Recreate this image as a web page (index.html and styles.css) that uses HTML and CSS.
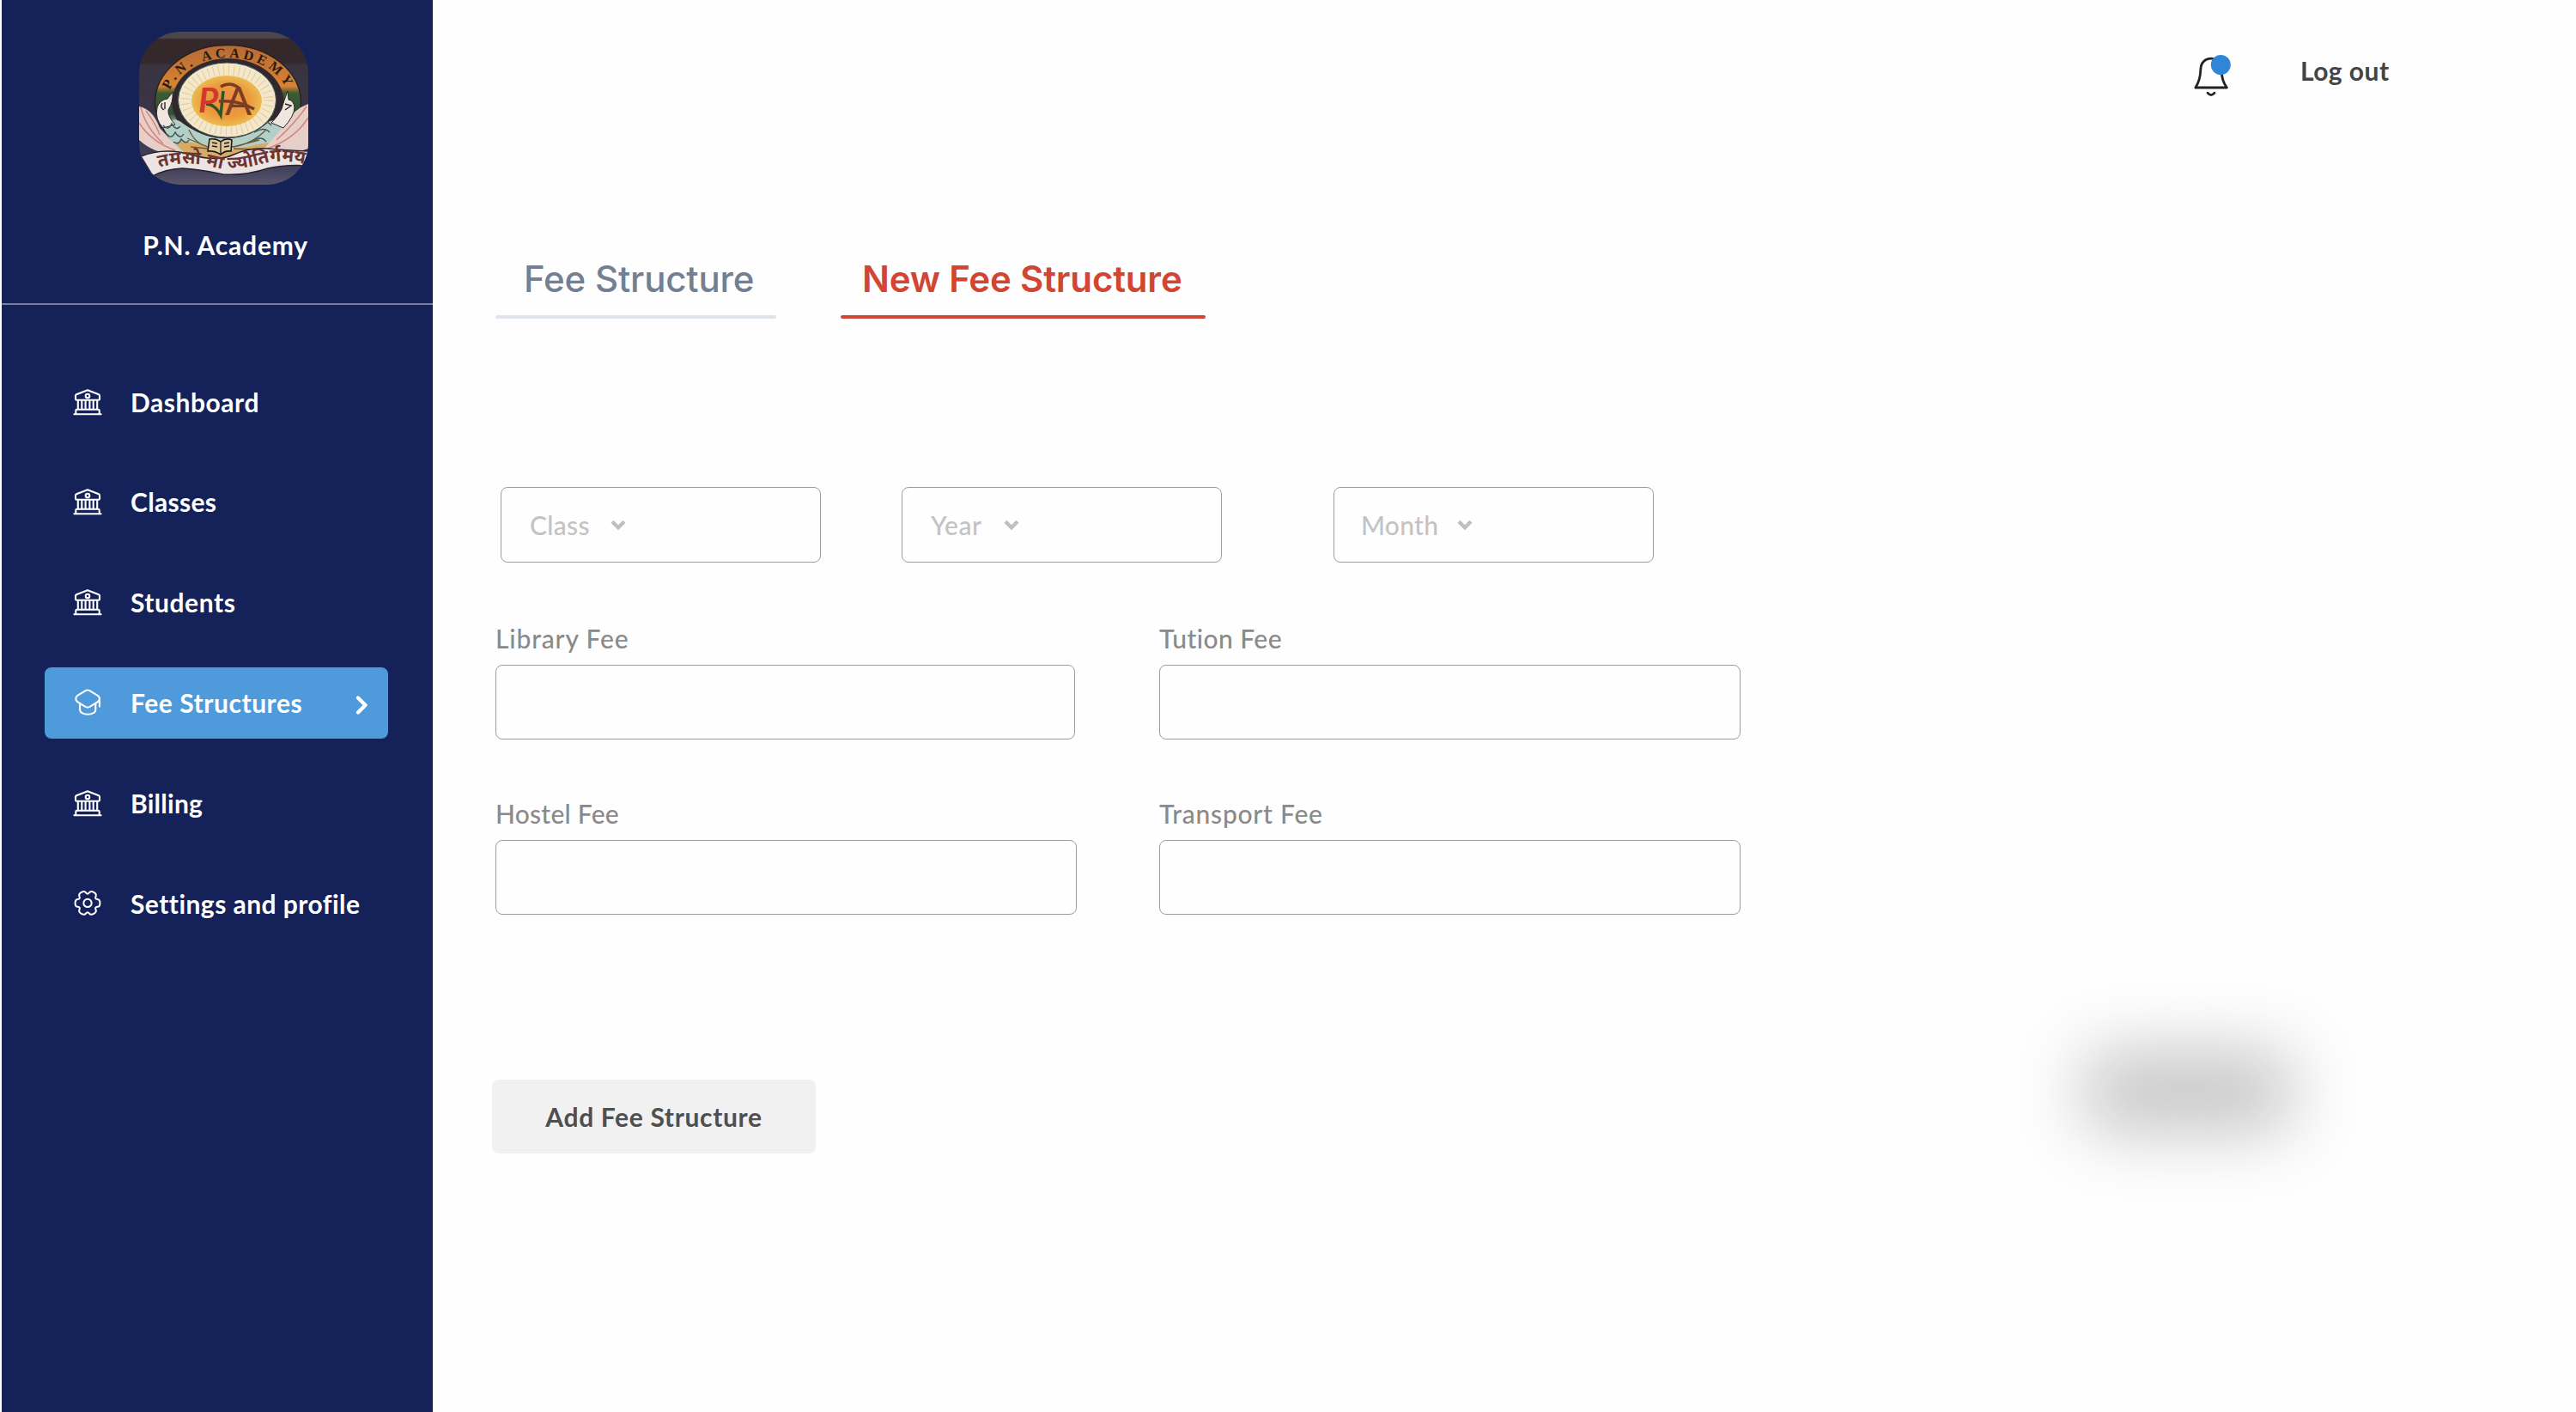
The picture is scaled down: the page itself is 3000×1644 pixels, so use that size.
FILE: index.html
```html
<!DOCTYPE html>
<html lang="en">
<head>
<meta charset="utf-8">
<title>P.N. Academy – New Fee Structure</title>
<link rel="stylesheet" href="styles.css">
</head>
<body>
<svg class="sprite" aria-hidden="true">
  <symbol id="bank" viewBox="0 0 34 34">
    <path d="M17 3.2 30 8.3Q31 8.7 31 9.8V13.6Q31 14.8 29.8 14.8H4.2Q3 14.8 3 13.6V9.8Q3 8.7 4 8.3Z"/>
    <circle cx="17" cy="10" r="2.3"/>
    <path d="M5.8 15V25.5M10.3 15V25.5M14.6 15V25.5M19.4 15V25.5M23.7 15V25.5M28.2 15V25.5"/>
    <path d="M3.3 31V27Q3.3 25.7 4.6 25.7H29.4Q30.7 25.7 30.7 27V31M1.4 31.2H32.6"/>
  </symbol>
  <symbol id="cap" viewBox="0 0 34 34">
    <path d="M14.6 3.2Q17 1.9 19.4 3.2L28.8 8.8Q31 10.2 31 12.4T28.8 16.2L19.6 21.9Q17 23.3 14.4 21.9L5.2 16.2Q3.3 14.8 3.3 12.4T5.2 8.8Z"/>
    <path d="M8.1 18.2V25.6Q8.1 27.6 10 28.8 17 32.8 24.4 28.8 26.3 27.6 26.3 25.6V18.2M30.9 12.6V21.6"/>
  </symbol>
  <symbol id="gear" viewBox="0 0 34 34">
    <g transform="translate(17 16.4) scale(.95)">
      <path d="M15.2 0Q15.2 4.35 11.93 4.68Q8.66 5 10.02 7.99Q11.37 10.98 7.6 13.16Q3.82 15.33 1.91 12.67Q0 10 -1.91 12.67Q-3.82 15.33 -7.6 13.16Q-11.37 10.98 -10.02 7.99Q-8.66 5 -11.93 4.68Q-15.2 4.35 -15.2 0Q-15.2 -4.35 -11.93 -4.68Q-8.66 -5 -10.02 -7.99Q-11.37 -10.98 -7.6 -13.16Q-3.82 -15.33 -1.91 -12.67Q0 -10 1.91 -12.67Q3.82 -15.33 7.6 -13.16Q11.37 -10.98 10.02 -7.99Q8.66 -5 11.93 -4.68Q15.2 -4.35 15.2 0Z"/>
      <circle r="4.9"/>
    </g>
  </symbol>
  <symbol id="down" viewBox="0 0 18 12">
    <path d="M2 2.2 9 9.2 16 2.2"/>
  </symbol>
</svg>
<div class="page">
  <aside class="sidebar">
    <div class="brand">
      <svg class="logo" viewBox="0 0 197 178" role="img" aria-label="P.N. Academy emblem">
        <defs>
          <linearGradient id="wall" x1="0" y1="0" x2="0" y2="1">
            <stop offset="0" stop-color="#4c484c"/><stop offset=".04" stop-color="#4a4549"/>
            <stop offset=".05" stop-color="#35282a"/><stop offset=".2" stop-color="#33282c"/>
            <stop offset=".22" stop-color="#3a3340"/><stop offset=".6" stop-color="#38344a"/>
            <stop offset=".9" stop-color="#42425f"/><stop offset="1" stop-color="#5a566a"/>
          </linearGradient>
          <linearGradient id="ring" x1="0" y1="0" x2="0" y2="1">
            <stop offset="0" stop-color="#b56a35"/><stop offset=".36" stop-color="#d98331"/>
            <stop offset=".42" stop-color="#3d5c33"/><stop offset=".6" stop-color="#2f5133"/>
            <stop offset=".7" stop-color="#a9c3b4"/><stop offset="1" stop-color="#d9b878"/>
          </linearGradient>
          <radialGradient id="sun">
            <stop offset="0" stop-color="#ee8b45"/><stop offset=".65" stop-color="#ec9a3c"/><stop offset="1" stop-color="#ebbc50"/>
          </radialGradient>
          <path id="arc" d="M34 80A70 50 0 0 1 174 80"/>
          <path id="wave" d="M23 158C50 151 66 153 88 158S128 157 146 153 176 151 200 155"/>
        </defs>
        <rect width="197" height="178" fill="url(#wall)"/>
        <ellipse cx="103.500" cy="82" rx="85" ry="66.500" fill="url(#ring)" stroke="#2a2020" stroke-width="1.500"/>
        <ellipse cx="103.500" cy="82" rx="65" ry="51" fill="#30272f"/>
        <path d="M26 108Q42 98 50 106 78 126 103 124 130 124 152 104 166 100 176 112L150 146H48Z" fill="#b4cfc8"/>
        <path d="M40 128Q70 126 96 140L124 134Q150 128 168 128L140 148H60Z" fill="#d9ab62"/>
        <path d="M0 87Q16 90 24 112L50 140Q22 146 0 126Z" fill="#e6cfc8"/>
        <path d="M2 88Q8 112 28 130M0 106Q14 128 42 138M8 92Q20 108 24 120" fill="none" stroke="#d4877c" stroke-width="1.500"/>
        <path d="M197 84Q180 90 172 106L144 138Q176 144 197 136Z" fill="#e6cfc8"/>
        <path d="M195 87Q182 106 160 126M197 100Q182 124 150 136" fill="none" stroke="#d4877c" stroke-width="1.500"/>
        <path d="M39 70Q40 82 34 91 33 98 42 108L28 112Q18 102 21 88 24 79 33 78Z" fill="#efe6df" stroke="#2b2622"/>
        <path d="M173 69Q168 82 166 90 162 98 154 106L168 112Q181 98 181 88 180 80 174 79Z" fill="#efe6df" stroke="#2b2622"/>
        <path d="M27 83Q24 88 29 91M30 82V90M170 84 177 86 170 91" fill="none" stroke="#2b2622" stroke-width="1.400"/>
        <path d="M28 109Q34 116 38 107 43 116 48 110M32 119Q38 126 42 117 48 126 52 119M40 128Q46 133 49 125 55 132 58 126M136 108Q148 101 154 109M134 117Q146 110 152 117M132 128Q142 120 148 128" fill="none" stroke="#3f5a58" stroke-width="1.500"/>
        <ellipse cx="102.500" cy="79.500" rx="57" ry="43.500" fill="#f3e7d0" stroke="#3b5a45"/>
        <ellipse cx="102.500" cy="79.500" rx="48" ry="35" fill="none" stroke="#e8cf86" stroke-width="12" stroke-dasharray="1 5"/>
        <ellipse cx="102" cy="80.500" rx="41" ry="29.500" fill="url(#sun)"/>
        <path d="M78 84Q88 84 95 97L98 69" fill="none" stroke="#2f5426" stroke-width="3.500"/>
        <path d="M95 64Q106 57 117 66M93 81Q115 79 134 90" fill="none" stroke="#7b3d22" stroke-width="3.500"/>
        <text class="mono-p" x="69" y="94">P</text>
        <text class="mono-a" x="100" y="97">A</text>
        <path d="M58 114Q66 132 82 134M148 114Q130 132 108 134M56 124 80 134M60 134 80 136M140 126 110 134M132 137 110 136" fill="none" stroke="#6d5a3c" stroke-width="1.300"/>
        <text class="arc-text"><textPath href="#arc" startOffset="50%">P.N. ACADEMY</textPath></text>
        <path d="M2 145Q30 134 60 143T110 143 150 136 197 139V156Q172 154 150 159 122 168 98 166 70 160 50 159 30 160 16 168Z" fill="#ece4e4" stroke="#2b2229" stroke-width="1.500"/>
        <path d="M82 125Q90 124 95 128 101 123 108 126L107 139Q100 138 95 143 88 138 80 139Z" fill="#ddc79a" stroke="#211c18" stroke-width="1.600"/>
        <path d="M95 128V143M85 129 91 130M85 133 91 134M99 130 105 129M99 134 105 133" stroke="#211c18" stroke-width="1.300"/>
        <text class="motto"><textPath href="#wave" textLength="172">तमसो मा ज्योतिर्गमय</textPath></text>
      </svg>
      <h1 class="brand-name">P.N. Academy</h1>
    </div>
    <nav class="nav">
      <a class="nav-item dashboard"><svg class="icon"><use href="#bank"/></svg>Dashboard</a>
      <a class="nav-item classes"><svg class="icon"><use href="#bank"/></svg>Classes</a>
      <a class="nav-item"><svg class="icon"><use href="#bank"/></svg>Students</a>
      <a class="nav-item active"><svg class="icon"><use href="#cap"/></svg>Fee Structures
        <svg class="go" viewBox="0 0 15 24"><path d="M3 3.500 11.500 12 3 20.500"/></svg></a>
      <a class="nav-item billing"><svg class="icon"><use href="#bank"/></svg>Billing</a>
      <a class="nav-item settings"><svg class="icon"><use href="#gear"/></svg>Settings and profile</a>
    </nav>
  </aside>
  <main class="main">
    <header class="topbar">
      <svg class="bell" viewBox="0 0 52 54">
        <path d="M23 6.200C16 6.200 11.200 11 10.900 18.500C10.500 29 9 34 4.800 40H41.400C37 34 35.400 29 35.100 18.500C34.800 11 30 6.200 23 6.200Z"/>
        <path d="M19 46.200Q23 51 27 46.200"/>
        <circle class="bell-dot" cx="34.300" cy="13.500" r="11.500"/>
      </svg>
      <a class="logout">Log out</a>
    </header>
    <div class="tabs">
      <a class="tab">Fee Structure</a>
      <a class="tab tab-active">New Fee Structure</a>
    </div>
    <div class="filters">
      <div class="select">Class<svg class="caret"><use href="#down"/></svg></div>
      <div class="select year">Year<svg class="caret"><use href="#down"/></svg></div>
      <div class="select month">Month<svg class="caret"><use href="#down"/></svg></div>
    </div>
    <form class="fees">
      <div class="field wide"><label for="library">Library Fee</label><input id="library" class="box"></div>
      <div class="field"><label for="tution">Tution Fee</label><input id="tution" class="box"></div>
      <div class="field hostel"><label for="hostel">Hostel Fee</label><input id="hostel" class="box"></div>
      <div class="field transport"><label for="transport">Transport Fee</label><input id="transport" class="box"></div>
    </form>
    <div class="actions">
      <button class="add" type="button">Add Fee Structure</button>
      <div class="glow"></div>
    </div>
  </main>
</div>
</body>
</html>
```
FILE: styles.css
```css
* { box-sizing: border-box; }

body {
  margin: 0;
  background: #fefefe;
  font-family: Lato, sans-serif;
  font-size: 30px;
  line-height: 36px;
}

.sprite { display: none; }

.page {
  display: flex;
  width: 3000px;
  height: 1644px;
  padding-left: 2px;
  overflow: hidden;
}

/* Sidebar */
.sidebar {
  flex: none;
  width: 502px;
  background: #152259;
  color: #fff;
  font-weight: 700;
}

.brand {
  display: flex;
  flex-direction: column;
  align-items: center;
  height: 355px;
  padding: 37px 0 0 15px;
  border-bottom: 2px solid #7a7f9f;
}

.logo {
  width: 197px;
  height: 178px;
  border-radius: 48px;
}

.brand-name {
  margin: 52px 0 0 4px;
  font-size: 30px;
  font-weight: 700;
  letter-spacing: .8px;
}

.arc-text {
  font: 600 16px "Liberation Serif", serif;
  letter-spacing: 4.2px;
  text-anchor: middle;
  fill: #2c1a10;
}

.motto { font: 700 21px "Noto Sans", sans-serif; fill: #6b3431; }
.mono-p { font: 700 italic 40px Lato, sans-serif; fill: #d0392b; }
.mono-a { font: 400 46px Lato, sans-serif; fill: #7b3d22; }

.nav {
  display: flex;
  flex-direction: column;
  gap: 33.8px;
  padding: 71.6px 52px 0 50px;
}

.nav-item {
  display: flex;
  align-items: flex-start;
  height: 83px;
  padding: 23px 23px 0 33px;
  border-radius: 8px;
  letter-spacing: .55px;
  white-space: nowrap;
}

.active { background: #4f9adb; }
.classes { letter-spacing: .3px; }
.billing { letter-spacing: .25px; }
.settings { letter-spacing: .45px; }

.icon {
  flex: none;
  width: 34px;
  height: 34px;
  margin: 1px 33px 0 0;
  fill: none;
  stroke: #fff;
  stroke-width: 2.1;
  stroke-linecap: round;
  stroke-linejoin: round;
}

.go {
  width: 15px;
  height: 24px;
  margin: 9px 0 0 auto;
  fill: none;
  stroke: #fff;
  stroke-width: 4.4;
  stroke-linecap: round;
  stroke-linejoin: round;
}

/* Content */
.main {
  flex: 1;
  display: flex;
  flex-direction: column;
}

.topbar {
  display: flex;
  justify-content: flex-end;
  gap: 75px;
  height: 300px;
  padding: 62px 213px 0 0;
}

.bell {
  width: 52px;
  height: 54px;
  fill: none;
  stroke: #222;
  stroke-width: 2.8;
  stroke-linecap: round;
  stroke-linejoin: round;
}

.bell-dot { fill: #2f86d6; stroke: none; }

.logout {
  width: 108px;
  padding-top: 2px;
  color: #444;
  font-weight: 700;
  letter-spacing: .45px;
}

.tabs {
  display: flex;
  gap: 75px;
  padding-left: 73px;
  font: 450 42px/50px Inter, sans-serif;
}

.tab {
  width: 327px;
  color: #738094;
  text-indent: 33px;
  letter-spacing: -.18px;
  white-space: nowrap;
}

.tab::after {
  content: "";
  display: block;
  height: 4px;
  margin-top: 17px;
  border-radius: 2px;
  background: #dfe4ea;
}

.tab-active {
  width: 425px;
  color: #d24532;
  font-weight: 600;
  text-indent: 25px;
  letter-spacing: -.18px;
}

.tab-active::after { background: #d24532; }

.filters {
  display: flex;
  gap: 94px;
  padding: 196px 0 0 79px;
}

.select {
  display: flex;
  align-items: center;
  gap: 24px;
  width: 373px;
  height: 88px;
  padding-left: 33px;
  border: 1px solid #9c9c9c;
  border-radius: 8px;
  color: #c3c3c3;
  font-weight: 500;
  letter-spacing: .3px;
}

.year { gap: 26px; letter-spacing: .5px; }
.month { gap: 22px; margin-left: 36px; padding-left: 31px; }

.caret {
  width: 18px;
  height: 12px;
  fill: none;
  stroke: #bfbfbf;
  stroke-width: 4.4;
}

.fees {
  display: grid;
  grid-template-columns: 677px 677px;
  gap: 68px 96px;
  margin: 0;
  padding: 70px 0 0 73px;
}

.field {
  display: flex;
  flex-direction: column;
  gap: 13px;
  color: #8a8a8a;
  font-weight: 500;
  letter-spacing: .45px;
}

.wide { padding-right: 2px; letter-spacing: .85px; }
.hostel { letter-spacing: .25px; }
.transport { letter-spacing: .75px; }

.box {
  width: 100%;
  height: 87px;
  border: 1px solid #9c9c9c;
  border-radius: 8px;
  background: transparent;
}

.actions {
  display: flex;
  align-items: flex-start;
  padding: 192px 0 0 69px;
}

.add {
  width: 377px;
  height: 86px;
  padding: 0;
  border: 0;
  border-radius: 8px;
  background: #f1f1f1;
  color: #4f4f4f;
  font: 700 30px/36px Lato, sans-serif;
  letter-spacing: .65px;
}

.glow {
  width: 244px;
  height: 92px;
  margin: -32px 0 0 1476px;
  border-radius: 30px;
  background: #c4c4c4;
  filter: blur(40px);
}
```
